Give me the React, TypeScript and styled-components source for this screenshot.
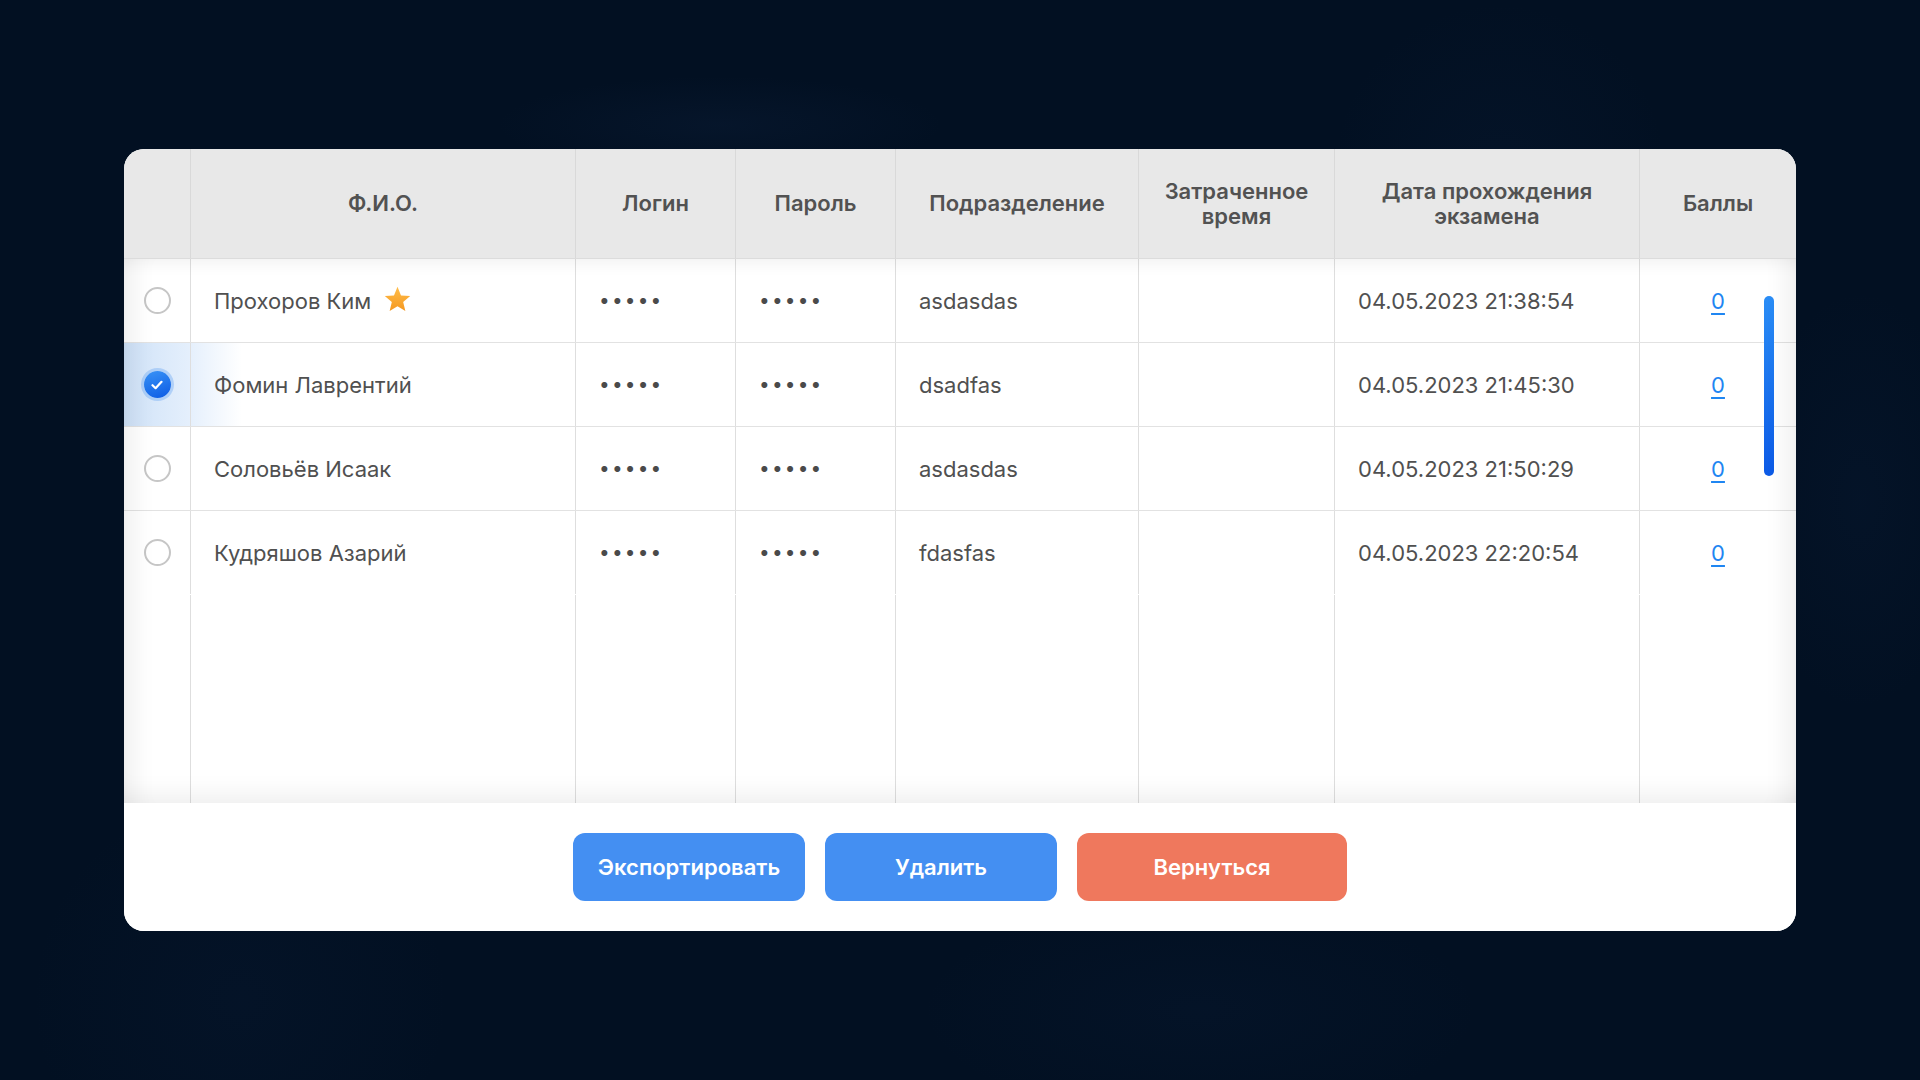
import React from "react";
import styled, { createGlobalStyle, css } from "styled-components";

const GlobalStyle = createGlobalStyle`
  html, body {
    margin: 0;
    padding: 0;
    height: 100%;
  }
  body {
    font-family: Inter, "Noto Sans", "Liberation Sans", sans-serif;
    background: #021022;
  }
  * {
    box-sizing: border-box;
  }
`;

const columns = "67px 385px 160px 160px 243px 196px 305px 156px";

type Student = {
  name: string;
  division: string;
  date: string;
  score: number;
  starred?: boolean;
  selected?: boolean;
};

const students: Student[] = [
  { name: "Прохоров Ким", division: "asdasdas", date: "04.05.2023 21:38:54", score: 0, starred: true },
  { name: "Фомин Лаврентий", division: "dsadfas", date: "04.05.2023 21:45:30", score: 0, selected: true },
  { name: "Соловьёв Исаак", division: "asdasdas", date: "04.05.2023 21:50:29", score: 0 },
  { name: "Кудряшов Азарий", division: "fdasfas", date: "04.05.2023 22:20:54", score: 0 },
];

export default function App() {
  return (
    <>
      <GlobalStyle />
      <Page>
        <Card>
          <HeaderRow>
            <HeadCell />
            <HeadCell>Ф.И.О.</HeadCell>
            <HeadCell>Логин</HeadCell>
            <HeadCell>Пароль</HeadCell>
            <HeadCell>Подразделение</HeadCell>
            <HeadCell>
              Затраченное
              <br />
              время
            </HeadCell>
            <HeadCell>
              Дата прохождения
              <br />
              экзамена
            </HeadCell>
            <HeadCell $last>Баллы</HeadCell>
          </HeaderRow>

          <Body>
            {students.map((s, i) => (
              <Row key={s.name} $selected={s.selected} $divider={i < students.length - 1}>
                <Cell $center>
                  <Radio $checked={s.selected}>
                    {s.selected && (
                      <svg width="12" height="10" viewBox="0 0 12 10">
                        <path
                          d="M1.5 5.2 L4.6 8.2 L10.5 1.8"
                          fill="none"
                          stroke="#fff"
                          strokeWidth="2.2"
                          strokeLinecap="round"
                          strokeLinejoin="round"
                        />
                      </svg>
                    )}
                  </Radio>
                </Cell>
                <Cell>
                  {s.name}
                  {s.starred && (
                    <Star viewBox="0 0 24 24">
                      <defs>
                        <linearGradient id="starGrad" x1="0" y1="0" x2="0" y2="1">
                          <stop offset="0" stopColor="#ffbd4a" />
                          <stop offset="1" stopColor="#f59820" />
                        </linearGradient>
                      </defs>
                      <path
                        d="M12 1.5 L14.9 8.6 L22.5 9.2 L16.7 14.1 L18.5 21.6 L12 17.6 L5.5 21.6 L7.3 14.1 L1.5 9.2 L9.1 8.6 Z"
                        fill="url(#starGrad)"
                      />
                    </Star>
                  )}
                </Cell>
                <Cell>
                  <Dots>•••••</Dots>
                </Cell>
                <Cell>
                  <Dots>•••••</Dots>
                </Cell>
                <Cell>{s.division}</Cell>
                <Cell />
                <Cell>{s.date}</Cell>
                <Cell $center $last>
                  <ScoreLink href="#">{s.score}</ScoreLink>
                </Cell>
              </Row>
            ))}
            <FillerRow>
              <Cell />
              <Cell />
              <Cell />
              <Cell />
              <Cell />
              <Cell />
              <Cell />
              <Cell $last />
            </FillerRow>
            <Scrollbar />
          </Body>

          <Footer>
            <ActionButton $width={232}>Экспортировать</ActionButton>
            <ActionButton $width={232}>Удалить</ActionButton>
            <ActionButton $width={270} $variant="danger">
              Вернуться
            </ActionButton>
          </Footer>
        </Card>
      </Page>
    </>
  );
}

const Page = styled.div`
  width: 100vw;
  height: 100vh;
  display: flex;
  align-items: center;
  justify-content: center;
  overflow: hidden;
  background:
    radial-gradient(ellipse 320px 70px at 720px 125px, rgba(40, 70, 120, 0.1), transparent 70%),
    radial-gradient(ellipse 240px 240px at 1500px 170px, rgba(30, 60, 110, 0.08), transparent 70%),
    radial-gradient(ellipse 300px 300px at 240px 1000px, rgba(30, 60, 110, 0.07), transparent 70%),
    radial-gradient(ellipse 400px 160px at 1200px 1010px, rgba(30, 60, 110, 0.07), transparent 70%),
    radial-gradient(ellipse 160px 300px at 1860px 500px, rgba(30, 60, 110, 0.08), transparent 70%),
    #021022;
`;

const Card = styled.div`
  width: 1672px;
  height: 782px;
  background: #fff;
  border-radius: 20px;
  overflow: hidden;
  display: flex;
  flex-direction: column;
`;

const HeaderRow = styled.div`
  display: grid;
  grid-template-columns: ${columns};
  height: 110px;
  background: #e8e8e8;
  border-bottom: 1px solid #dcdcdc;
`;

const HeadCell = styled.div<{ $last?: boolean }>`
  display: flex;
  align-items: center;
  justify-content: center;
  text-align: center;
  font-size: 22px;
  font-weight: 600;
  line-height: 25px;
  color: #525252;
  border-right: ${(p) => (p.$last ? "none" : "1px solid #d9d9d9")};
`;

const Body = styled.div`
  position: relative;
  height: 544px;
  display: flex;
  flex-direction: column;

  &::after {
    content: "";
    position: absolute;
    inset: 0;
    pointer-events: none;
    box-shadow:
      inset 0 14px 18px -12px rgba(0, 0, 0, 0.07),
      inset 0 -26px 26px -20px rgba(0, 0, 0, 0.08),
      inset 30px 0 26px -22px rgba(0, 0, 0, 0.07),
      inset -30px 0 26px -22px rgba(0, 0, 0, 0.07);
  }
`;

const Row = styled.div<{ $selected?: boolean; $divider?: boolean }>`
  display: grid;
  grid-template-columns: ${columns};
  height: 84px;
  flex-shrink: 0;
  border-bottom: ${(p) => (p.$divider ? "1px solid #e2e2e2" : "1px solid transparent")};
  ${(p) =>
    p.$selected &&
    css`
      background: linear-gradient(90deg, #cfe2f8 0px, #e4effc 64px, rgba(255, 255, 255, 0) 118px);
    `}
`;

const FillerRow = styled.div`
  display: grid;
  grid-template-columns: ${columns};
  flex: 1;
`;

const Cell = styled.div<{ $center?: boolean; $last?: boolean }>`
  display: flex;
  align-items: center;
  justify-content: ${(p) => (p.$center ? "center" : "flex-start")};
  padding: ${(p) => (p.$center ? "0" : "0 23px")};
  font-size: 22px;
  color: #505050;
  white-space: nowrap;
  border-right: ${(p) => (p.$last ? "none" : "1px solid #dedede")};
`;

const Radio = styled.span<{ $checked?: boolean }>`
  width: 27px;
  height: 27px;
  border-radius: 50%;
  display: inline-flex;
  align-items: center;
  justify-content: center;
  ${(p) =>
    p.$checked
      ? css`
          background: linear-gradient(160deg, #3a94f7 0%, #0b5ae4 100%);
          box-shadow: 0 0 0 3px rgba(120, 175, 245, 0.45);
        `
      : css`
          background: #fff;
          border: 2px solid #c6c6c6;
        `}
`;

const Star = styled.svg`
  width: 29px;
  height: 29px;
  margin-left: 12px;
  margin-top: -3px;
`;

const Dots = styled.span`
  font-size: 19px;
  letter-spacing: 2.2px;
  color: #4a4a4a;
`;

const ScoreLink = styled.a`
  color: #1f86f2;
  text-decoration: underline;
  text-underline-offset: 4px;
  text-decoration-thickness: 1.5px;
  font-size: 22px;
`;

const Scrollbar = styled.div`
  position: absolute;
  right: 22px;
  top: 37px;
  width: 10px;
  height: 180px;
  border-radius: 5px;
  background: linear-gradient(180deg, #2a8df6 0%, #0c5ae6 100%);
`;

const Footer = styled.div`
  flex: 1;
  display: flex;
  align-items: center;
  justify-content: center;
  gap: 20px;
  background: #fff;
`;

const ActionButton = styled.button<{ $width: number; $variant?: "primary" | "danger" }>`
  width: ${(p) => p.$width}px;
  height: 68px;
  border: none;
  border-radius: 12px;
  font-family: Inter, "Noto Sans", "Liberation Sans", sans-serif;
  font-size: 22px;
  font-weight: 600;
  color: #fff;
  cursor: pointer;
  background: ${(p) => (p.$variant === "danger" ? "#ef785d" : "#448ff2")};
`;
